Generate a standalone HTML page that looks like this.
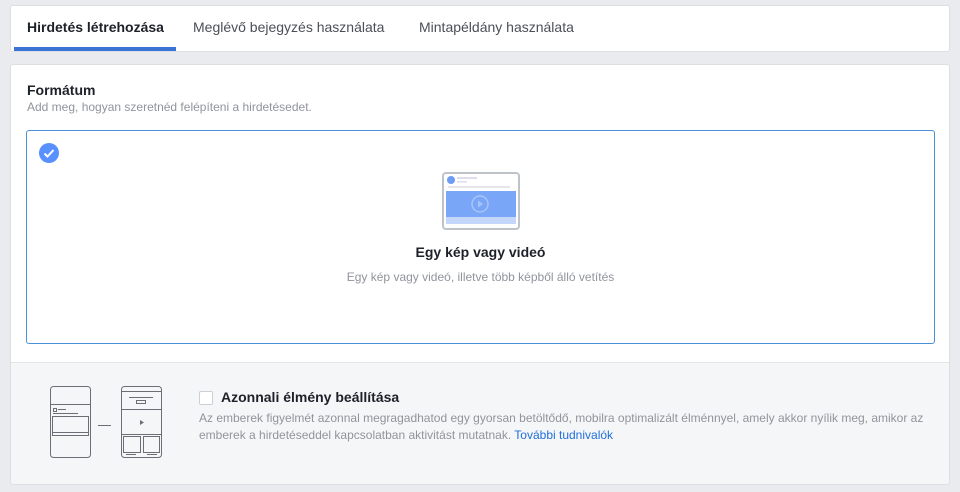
<!DOCTYPE html>
<html><head><meta charset="utf-8"><style>
*{box-sizing:border-box;margin:0;padding:0}
body{width:960px;height:492px;background:#e9ebee;font-family:"Liberation Sans",Arial,sans-serif;position:relative;overflow:hidden}
.card{position:absolute;left:10px;width:940px;background:#fff;border:1px solid #dddfe2;border-radius:3px}
.tabs{top:5px;height:47px}
.tab{position:absolute;top:13px;font-size:14px;color:#4b4f56}
.ul{position:absolute;left:3px;top:41px;width:162px;height:4px;background:#3b73d4}
.main{top:64px;height:421px;overflow:hidden}
h3{position:absolute;left:16px;top:17px;font-size:14px;font-weight:bold;color:#1d2129}
.sub{position:absolute;left:16px;top:35px;font-size:12px;color:#90949c}
.sel{position:absolute;left:15px;top:65px;width:909px;height:214px;border:1px solid #4a90d9;border-radius:3px}
.chk{position:absolute;left:12px;top:12px;width:20px;height:20px;border-radius:50%;background:#5890ff}
.t1{position:absolute;left:0;right:0;top:113px;text-align:center;font-size:14px;font-weight:bold;color:#1d2129}
.t2{position:absolute;left:0;right:0;top:139px;text-align:center;font-size:12px;color:#90949c}
.foot{position:absolute;left:0;right:0;top:297px;bottom:0;background:#f5f6f7;border-top:1px solid #e5e5e5}
.cb{position:absolute;left:188px;top:28px;width:14px;height:14px;border:1px solid #ccd0d5;background:#fff;border-radius:2px}
.ft{position:absolute;left:210px;top:26px;font-size:14px;font-weight:bold;color:#1d2129}
.fd{position:absolute;left:188px;top:47px;width:730px;font-size:12px;line-height:17px;color:#90949c}
.fd a{color:#216fdb;text-decoration:none}
</style></head><body>
<div class="card tabs">
 <div class="tab" style="left:16px;color:#1d2129;font-weight:bold">Hirdetés létrehozása</div>
 <div class="tab" style="left:182px">Meglévő bejegyzés használata</div>
 <div class="tab" style="left:408px">Mintapéldány használata</div>
 <div class="ul"></div>
</div>
<div class="card main">
 <h3>Formátum</h3>
 <div class="sub">Add meg, hogyan szeretnéd felépíteni a hirdetésedet.</div>
 <div class="sel">
  <div class="chk"><svg width="20" height="20"><path d="M5.5 10.5l3 3 6-6.5" stroke="#fff" stroke-width="2" fill="none"/></svg></div>
  <svg style="position:absolute;left:415px;top:41px" width="78" height="58">
   <rect x="1" y="1" width="76" height="56" rx="3" fill="#fff" stroke="#bec3c9" stroke-width="2"/>
   <circle cx="9" cy="8" r="4" fill="#6d9cf5"/>
   <rect x="15" y="5" width="20" height="2" fill="#dde"/><rect x="15" y="9" width="10" height="1.5" fill="#dde"/>
   <rect x="6" y="14" width="62" height="2" fill="#e4e6ea"/>
   <rect x="4" y="19" width="70" height="26" fill="#7aa6f7"/>
   <circle cx="38" cy="32" r="8" fill="none" stroke="#a9c4f9" stroke-width="1.5"/>
   <path d="M36 28.5l5 3.5-5 3.5z" fill="#a9c4f9"/>
   <rect x="4" y="45" width="70" height="7" fill="#c4d7fb"/>
  </svg>
  <div class="t1">Egy kép vagy videó</div>
  <div class="t2">Egy kép vagy videó, illetve több képből álló vetítés</div>
 </div>
 <div class="foot">
  <svg style="position:absolute;left:27px;top:20px" width="130" height="80" fill="none" stroke="#6a6e75" stroke-width="1">
   <rect x="12.5" y="3.5" width="40" height="71" rx="3"/>
   <line x1="12.5" y1="21.5" x2="52.5" y2="21.5"/>
   <rect x="15.5" y="25.5" width="3" height="3"/><line x1="20" y1="26.5" x2="28" y2="26.5"/><line x1="15" y1="30.5" x2="40" y2="30.5"/>
   <rect x="14.5" y="33.5" width="36" height="19"/><line x1="14.5" y1="49.5" x2="50.5" y2="49.5"/>
   <line x1="60" y1="42.5" x2="73" y2="42.5"/>
   <rect x="83.5" y="3.5" width="40" height="71" rx="3"/>
   <line x1="83.5" y1="8.5" x2="123.5" y2="8.5"/>
   <line x1="91" y1="14.5" x2="115" y2="14.5"/><rect x="98.5" y="17.5" width="9" height="3"/>
   <line x1="83.5" y1="26.5" x2="123.5" y2="26.5"/>
   <path d="M102 37v5l4-2.5z" fill="#6a6e75" stroke="none"/>
   <line x1="83.5" y1="51.5" x2="123.5" y2="51.5"/>
   <rect x="85.5" y="53.5" width="17" height="16"/><rect x="105.5" y="53.5" width="16" height="16"/>
   <line x1="88" y1="71.5" x2="98" y2="71.5"/><line x1="109" y1="71.5" x2="119" y2="71.5"/>
  </svg>
  <div class="cb"></div>
  <div class="ft">Azonnali élmény beállítása</div>
  <div class="fd">Az emberek figyelmét azonnal megragadhatod egy gyorsan betöltődő, mobilra optimalizált élménnyel, amely akkor nyílik meg, amikor az emberek a hirdetéseddel kapcsolatban aktivitást mutatnak. <a>További tudnivalók</a></div>
 </div>
</div>
</body></html>
